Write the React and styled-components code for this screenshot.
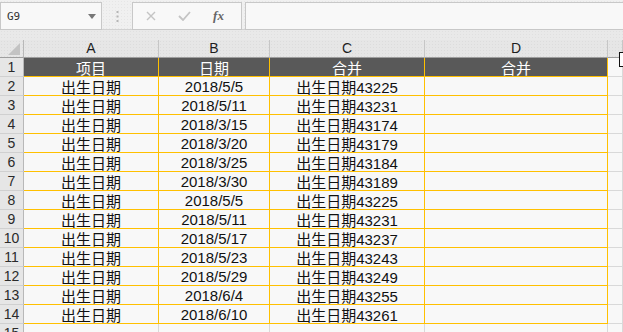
import React from 'react';
import styled, { createGlobalStyle } from 'styled-components';

const GlobalStyle = createGlobalStyle`
  html, body {
    margin: 0;
    padding: 0;
    background: #f1f1f1;
    overflow: hidden;
  }
`;

const cjk = `"Liberation Sans", "Noto Sans CJK SC", sans-serif`;

const Page = styled.div`
  position: relative;
  width: 623px;
  height: 332px;
  overflow: hidden;
  font-family: ${cjk};
  background: #f1f1f1;
`;

const FormulaBar = styled.div`
  display: flex;
  align-items: flex-start;
  height: 30px;
  padding-top: 2px;
  box-sizing: border-box;
  border-bottom: 1px solid #d2d2d2;
  background-color: #f0f0f0;
  background-image: radial-gradient(#e6e6e6 0.6px, transparent 0.6px);
  background-size: 3px 3px;
`;

const NameBox = styled.div`
  display: flex;
  align-items: center;
  justify-content: space-between;
  width: 102px;
  height: 28px;
  box-sizing: border-box;
  border: 1px solid #c8c8c8;
  background: #f8f8f8;
  padding: 0 5px 0 6px;
  font-family: "DejaVu Sans Mono", monospace;
  font-size: 11px;
  color: #333;
`;

const Grip = styled.div`
  width: 30px;
  display: flex;
  justify-content: center;
  padding-top: 9px;
`;

const FxButtons = styled.div`
  display: flex;
  align-items: center;
  justify-content: space-around;
  width: 110px;
  height: 28px;
  box-sizing: border-box;
  border: 1px solid #c8c8c8;
  background: #f8f8f8;
  padding: 0 6px 0 2px;
`;

const FxLabel = styled.span`
  font-family: "Liberation Serif", serif;
  font-style: italic;
  font-weight: bold;
  font-size: 13px;
  color: #666;
`;

const FormulaInput = styled.div`
  flex: 1;
  height: 28px;
  margin-left: 3px;
  box-sizing: border-box;
  border: 1px solid #c8c8c8;
  border-right: none;
  background: #f8f8f8;
`;

const Spacer = styled.div`
  height: 10px;
  background-color: #e9e9e9;
  background-image: radial-gradient(#e0e0e0 0.6px, transparent 0.6px);
  background-size: 3px 3px;
`;

const Sheet = styled.div`
  display: grid;
  grid-template-columns: 24px 135px 111px 155px 183px 1fr;
  grid-auto-rows: 19px;
  grid-template-rows: 18px;
  background: #f8f8f8;
`;

const ColHead = styled.div`
  display: flex;
  align-items: flex-end;
  justify-content: center;
  box-sizing: border-box;
  padding-bottom: 1px;
  border-right: 1px solid #c6c6c6;
  border-bottom: 1px solid #9e9e9e;
  background-color: #e6e6e6;
  background-image: radial-gradient(#dcdcdc 0.6px, transparent 0.6px);
  background-size: 3px 3px;
  font-family: "Liberation Sans", sans-serif;
  font-size: 14px;
  color: #1e1e1e;
`;

const Corner = styled(ColHead)`
  align-items: flex-end;
  justify-content: flex-end;
  padding: 0 3px 2px 0;
  border-right: 1px solid #b8b8b8;
`;

const RowHead = styled.div`
  display: flex;
  align-items: center;
  justify-content: center;
  box-sizing: border-box;
  border-right: 1px solid #b8b8b8;
  border-bottom: 1px solid #d0d0d0;
  background: #e6e6e6;
  font-family: "Liberation Sans", sans-serif;
  font-size: 14px;
  color: #2a2a2a;
`;

const Cell = styled.div`
  display: flex;
  align-items: center;
  justify-content: center;
  box-sizing: border-box;
  padding-top: 1px;
  white-space: nowrap;
  overflow: hidden;
  font-size: 15px;
  border-right: 1px solid ${(p) => (p.$plain ? '#d9d9d9' : '#ffc000')};
  border-bottom: 1px solid ${(p) => (p.$plain ? '#d9d9d9' : '#ffc000')};
  background: ${(p) => (p.$head ? '#595959' : '#f8f8f8')};
  color: ${(p) => (p.$head ? '#ffffff' : '#111111')};
`;

const Cursor = styled.div`
  position: absolute;
  left: 619px;
  top: 52px;
  width: 5px;
  height: 15px;
  box-sizing: border-box;
  border: 1.5px solid #111;
  border-right: none;
  background: #fff;
`;

const rows = [
  ['2018/5/5', '43225'],
  ['2018/5/11', '43231'],
  ['2018/3/15', '43174'],
  ['2018/3/20', '43179'],
  ['2018/3/25', '43184'],
  ['2018/3/30', '43189'],
  ['2018/5/5', '43225'],
  ['2018/5/11', '43231'],
  ['2018/5/17', '43237'],
  ['2018/5/23', '43243'],
  ['2018/5/29', '43249'],
  ['2018/6/4', '43255'],
  ['2018/6/10', '43261'],
];

export default function App() {
  return (
    <Page>
      <GlobalStyle />
      <FormulaBar>
        <NameBox>
          <span>G9</span>
          <svg width="8" height="5" viewBox="0 0 8 5">
            <path d="M0 0 H8 L4 5 Z" fill="#777" />
          </svg>
        </NameBox>
        <Grip>
          <svg width="3" height="11" viewBox="0 0 3 11">
            <rect x="0.5" y="0" width="2" height="2" fill="#b5b5b5" />
            <rect x="0.5" y="4.5" width="2" height="2" fill="#b5b5b5" />
            <rect x="0.5" y="9" width="2" height="2" fill="#b5b5b5" />
          </svg>
        </Grip>
        <FxButtons>
          <svg width="10" height="10" viewBox="0 0 10 10">
            <path d="M1 1 L9 9 M9 1 L1 9" stroke="#c4c4c4" strokeWidth="1.4" />
          </svg>
          <svg width="13" height="10" viewBox="0 0 13 10">
            <path d="M1 5 L5 9 L12 1" stroke="#c4c4c4" strokeWidth="1.8" fill="none" />
          </svg>
          <FxLabel>fx</FxLabel>
        </FxButtons>
        <FormulaInput />
      </FormulaBar>
      <Spacer />
      <Sheet>
        <Corner>
          <svg width="12" height="12" viewBox="0 0 12 12">
            <path d="M12 0 V12 H0 Z" fill="#c3c3c3" />
          </svg>
        </Corner>
        {['A', 'B', 'C', 'D', ''].map((c, i) => (
          <ColHead key={i}>{c}</ColHead>
        ))}

        <RowHead>1</RowHead>
        <Cell $head>项目</Cell>
        <Cell $head>日期</Cell>
        <Cell $head>合并</Cell>
        <Cell $head>合并</Cell>
        <Cell $plain />

        {rows.map(([date, num], i) => (
          <React.Fragment key={i}>
            <RowHead>{i + 2}</RowHead>
            <Cell>出生日期</Cell>
            <Cell>{date}</Cell>
            <Cell>出生日期{num}</Cell>
            <Cell />
            <Cell $plain />
          </React.Fragment>
        ))}

        <RowHead>15</RowHead>
        <Cell $plain />
        <Cell $plain />
        <Cell $plain />
        <Cell $plain />
        <Cell $plain />
      </Sheet>
      <Cursor />
    </Page>
  );
}
